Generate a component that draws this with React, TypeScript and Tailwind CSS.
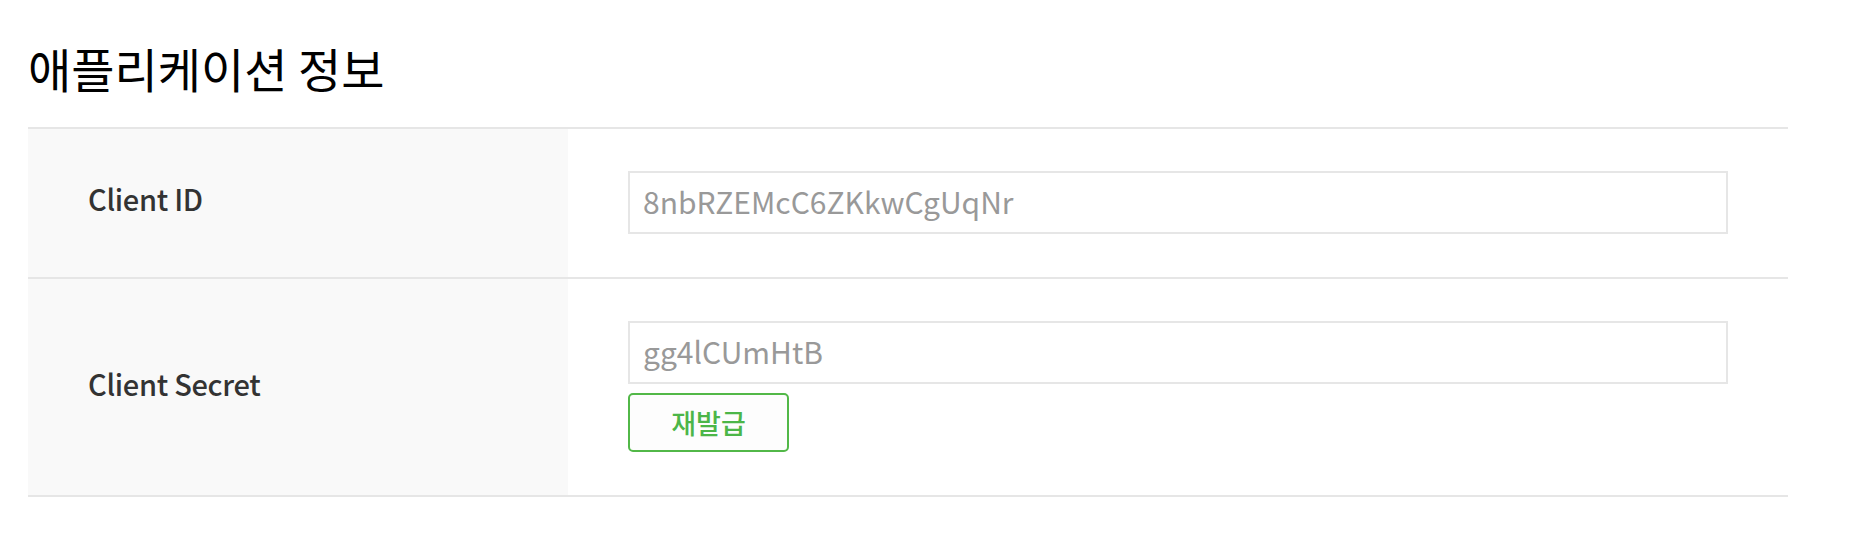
import React from "react";

const font = { fontFamily: '"Noto Sans CJK KR", "Noto Sans", sans-serif' };

export default function App() {
  return (
    <div className="min-h-[546px] bg-white pl-[28px] pr-[68px] pt-[44px]" style={font}>
      <h1 className="text-[47px] leading-[47px] font-normal text-black">애플리케이션 정보</h1>
      <div className="mt-[36px] border-t-2 border-[#e6e6e6]">
        <div className="flex border-b-2 border-[#e6e6e6]">
          <div className="w-[540px] shrink-0 bg-[#f9f9f9] pl-[60px] pb-[9px] flex items-center">
            <span className="text-[29px] font-medium text-[#333] leading-none tracking-[-0.3px]">Client ID</span>
          </div>
          <div className="flex-1 px-[60px] pt-[42px] pb-[43px]">
            <div className="h-[63px] border-2 border-[#e6e6e6] bg-white flex items-center px-[13px] pb-[4px]">
              <span className="text-[30px] text-[#999] leading-none">8nbRZEMcC6ZKkwCgUqNr</span>
            </div>
          </div>
        </div>
        <div className="flex border-b-2 border-[#e6e6e6]">
          <div className="w-[540px] shrink-0 bg-[#f9f9f9] pl-[60px] pb-[8px] flex items-center">
            <span className="text-[29px] font-medium text-[#333] leading-none tracking-[-0.3px]">Client Secret</span>
          </div>
          <div className="flex-1 px-[60px] pt-[42px] pb-[43px] flex flex-col items-start gap-[9px]">
            <div className="self-stretch h-[63px] border-2 border-[#e6e6e6] bg-white flex items-center px-[13px] pb-[4px]">
              <span className="text-[30px] text-[#999] leading-none">gg4lCUmHtB</span>
            </div>
            <button className="w-[161px] h-[59px] rounded-[5px] border-2 border-[#52b848] bg-[#fdfdfd] text-[#4cb648] text-[27px] font-medium leading-none flex items-center justify-center">
              재발급
            </button>
          </div>
        </div>
      </div>
    </div>
  );
}
